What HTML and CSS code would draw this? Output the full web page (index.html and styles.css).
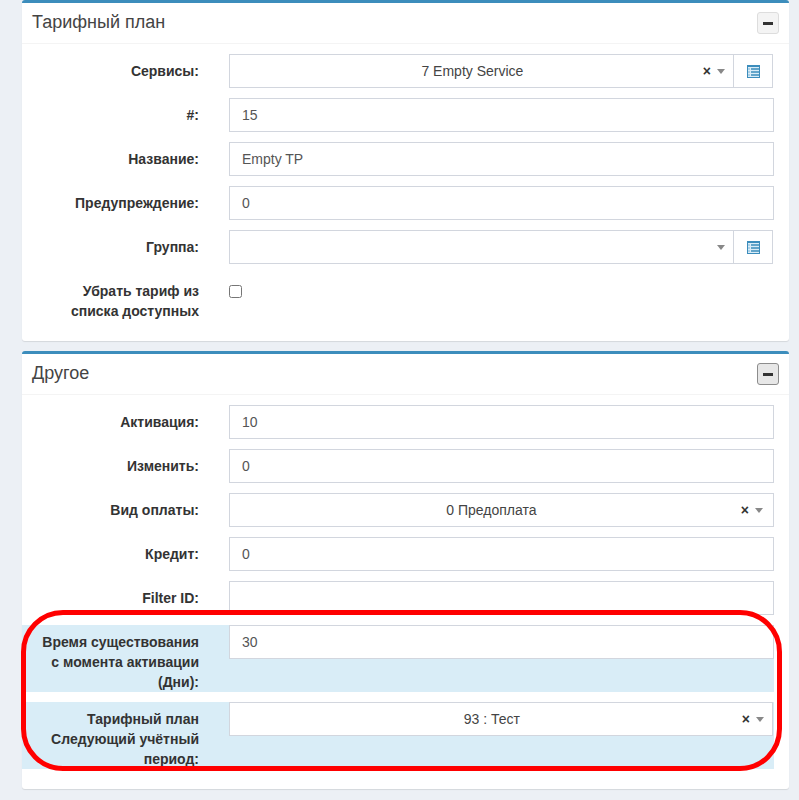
FILE: index.html
```html
<!DOCTYPE html>
<html lang="ru">
<head>
  <meta charset="UTF-8">
  <meta name="viewport" content="width=device-width, initial-scale=1.0">
  <title>Тарифный план</title>
  <link rel="stylesheet" href="styles.css">
</head>
<body>
  <main class="content">
    <section class="box">
      <header class="box-header">
        <h3>Тарифный план</h3>
        <button class="box-tool" type="button"><span class="minus"></span></button>
      </header>
      <div class="box-body">
        <div class="row">
          <label>Сервисы:</label>
          <div class="input-group">
            <div class="select">
              <span class="select-value">7 Empty Service</span>
              <span class="clear">×</span>
              <span class="arrow"></span>
            </div>
            <button class="addon" type="button">
              <svg class="list-icon" width="13" height="13" viewBox="0 0 13 13">
                <rect width="13" height="13" fill="#3c8dbc"/>
                <rect x="1" y="2" width="11" height="10" fill="#d9ecf7"/>
                <path d="M1 4h2M1 7h2M1 10h2" stroke="#9cc8e3" stroke-width="1.500"/>
                <path d="M4 4h8M4 7h8M4 10h8" stroke="#3c8dbc" stroke-width="1.500"/>
              </svg>
            </button>
          </div>
        </div>
        <div class="row">
          <label>#:</label>
          <input class="input" type="text" value="15">
        </div>
        <div class="row">
          <label>Название:</label>
          <input class="input" type="text" value="Empty TP">
        </div>
        <div class="row">
          <label>Предупреждение:</label>
          <input class="input" type="text" value="0">
        </div>
        <div class="row">
          <label>Группа:</label>
          <div class="input-group">
            <div class="select">
              <span class="select-value"></span>
              <span class="arrow"></span>
            </div>
            <button class="addon" type="button">
              <svg class="list-icon" width="13" height="13" viewBox="0 0 13 13">
                <rect width="13" height="13" fill="#3c8dbc"/>
                <rect x="1" y="2" width="11" height="10" fill="#d9ecf7"/>
                <path d="M1 4h2M1 7h2M1 10h2" stroke="#9cc8e3" stroke-width="1.500"/>
                <path d="M4 4h8M4 7h8M4 10h8" stroke="#3c8dbc" stroke-width="1.500"/>
              </svg>
            </button>
          </div>
        </div>
        <div class="row row-check">
          <label>Убрать тариф из<br>списка доступных</label>
          <span class="checkbox"></span>
        </div>
      </div>
    </section>

    <section class="box">
      <header class="box-header">
        <h3>Другое</h3>
        <button class="box-tool box-tool-active" type="button"><span class="minus"></span></button>
      </header>
      <div class="box-body">
        <div class="row">
          <label>Активация:</label>
          <input class="input" type="text" value="10">
        </div>
        <div class="row">
          <label>Изменить:</label>
          <input class="input" type="text" value="0">
        </div>
        <div class="row">
          <label>Вид оплаты:</label>
          <div class="select">
            <span class="select-value">0 Предоплата</span>
            <span class="clear">×</span>
            <span class="arrow"></span>
          </div>
        </div>
        <div class="row">
          <label>Кредит:</label>
          <input class="input" type="text" value="0">
        </div>
        <div class="row">
          <label>Filter ID:</label>
          <input class="input" type="text" value="">
        </div>
        <div class="row row-info">
          <label>Время существования<br>с момента активации<br>(Дни):</label>
          <input class="input" type="text" value="30">
        </div>
        <div class="row row-info">
          <label>Тарифный план<br>Следующий учётный<br>период:</label>
          <div class="select select-narrow">
            <span class="select-value">93 : Тест</span>
            <span class="clear">×</span>
            <span class="arrow"></span>
          </div>
        </div>
      </div>
    </section>
    <div class="callout"></div>
  </main>
</body>
</html>
```

FILE: styles.css
```css
* {
  box-sizing: border-box;
}
body {
  margin: 0;
  background: #ecf0f5;
  color: #333;
  font-family: "Liberation Sans", Arial, sans-serif;
  font-size: 14px;
  line-height: 20px;
}
.content {
  position: relative;
  width: 767px;
  margin-left: 22px;
}
.box {
  background: #fff;
  border-top: 3px solid #3c8dbc;
  border-radius: 3px;
  box-shadow: 0 1px 1px rgba(0, 0, 0, 0.1);
  margin-bottom: 10px;
}
.box-header {
  display: flex;
  align-items: center;
  justify-content: space-between;
  height: 41px;
  padding: 0 10px;
  border-bottom: 1px solid #f4f4f4;
}
.box-header h3 {
  margin: 0 0 2px;
  font-size: 18px;
  font-weight: 400;
  line-height: 20px;
  color: #444;
}
.box-tool {
  display: flex;
  align-items: center;
  justify-content: center;
  width: 22px;
  height: 22px;
  padding: 0;
  background: #f4f4f4;
  border: 1px solid #ddd;
  border-radius: 3px;
}
.box-tool-active {
  background: #e7e7e7;
  border-color: #8c8c8c;
}
.minus {
  display: block;
  width: 10px;
  height: 3px;
  background: #333;
}
.box-body {
  padding: 10px 15px 10px 0;
}
.row {
  display: grid;
  grid-template-columns: 177px 1fr;
  column-gap: 30px;
  margin-bottom: 10px;
}
.row label {
  padding-top: 7px;
  text-align: right;
  font-weight: 700;
}
.input {
  width: 100%;
  height: 34px;
  padding: 6px 12px;
  background: #fff;
  border: 1px solid #d2d6de;
  border-radius: 0;
  color: #555;
  font: inherit;
}
.input-group {
  display: flex;
  padding-right: 1px;
}
.select {
  display: flex;
  flex: 1;
  align-items: center;
  height: 34px;
  padding: 0 10px 0 12px;
  background: #fff;
  border: 1px solid #d2d6de;
  color: #444;
}
.input-group .select {
  border-right: 0;
  padding-right: 8px;
}
.select-narrow {
  margin-right: 1px;
  padding-right: 8px;
}
.select-value {
  flex: 1;
  text-align: center;
}
.clear {
  margin-right: 6px;
  color: #333;
  font-weight: 700;
}
.arrow {
  width: 0;
  height: 0;
  border-top: 5px solid #888;
  border-left: 4px solid transparent;
  border-right: 4px solid transparent;
}
.addon {
  display: flex;
  align-items: center;
  justify-content: center;
  width: 40px;
  height: 34px;
  padding: 0;
  background: #fff;
  border: 1px solid #d2d6de;
}
.row-check {
  min-height: 47px;
}
.checkbox {
  display: block;
  width: 13px;
  height: 13px;
  margin-top: 11px;
  background: #fff;
  border: 1px solid #767676;
  border-radius: 2.500px;
}
.row-info {
  background: #d9edf7;
  height: 67px;
}
.callout {
  position: absolute;
  left: -1px;
  top: 610px;
  width: 761px;
  height: 161px;
  border: 5px solid #f00;
  border-radius: 42px;
  pointer-events: none;
}
```
